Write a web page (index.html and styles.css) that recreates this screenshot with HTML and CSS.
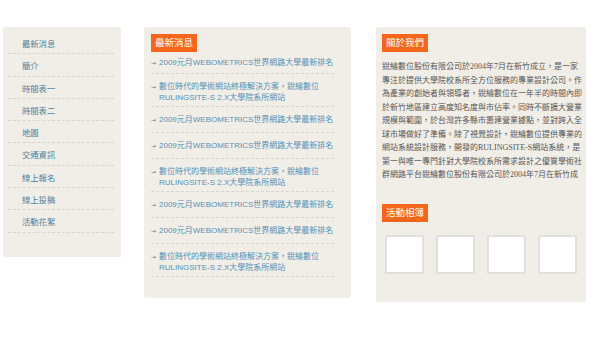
FILE: index.html
```html
<!DOCTYPE html>
<html lang="zh-Hant">
<head>
    <meta charset="UTF-8">
    <meta name="viewport" content="width=device-width, initial-scale=1.0">
    <title>銳綸數位</title>
    <link rel="stylesheet" href="styles.css">
</head>
<body>

    <div class="page">
        <div class="box side">
            <ul class="menu">
                <li><a href="#">最新消息</a></li>
                <li><a href="#">簡介</a></li>
                <li><a href="#">時間表一</a></li>
                <li><a href="#">時間表二</a></li>
                <li><a href="#">地圖</a></li>
                <li><a href="#">交通資訊</a></li>
                <li><a href="#">線上報名</a></li>
                <li><a href="#">線上投稿</a></li>
                <li><a href="#">活動花絮</a></li>
            </ul>
        </div>

        <div class="box news">
            <h3 class="title">最新消息</h3>
            <ul class="news-list">
                <li><a href="#">2009元月WEBOMETRICS世界網路大學最新排名</a></li>
                <li><a href="#">數位時代的學術網站終極解決方案，銳綸數位 RULINGSITE-S 2.X大學院系所網站</a></li>
                <li><a href="#">2009元月WEBOMETRICS世界網路大學最新排名</a></li>
                <li><a href="#">2009元月WEBOMETRICS世界網路大學最新排名</a></li>
                <li><a href="#">數位時代的學術網站終極解決方案，銳綸數位 RULINGSITE-S 2.X大學院系所網站</a></li>
                <li><a href="#">2009元月WEBOMETRICS世界網路大學最新排名</a></li>
                <li><a href="#">2009元月WEBOMETRICS世界網路大學最新排名</a></li>
                <li><a href="#">數位時代的學術網站終極解決方案，銳綸數位 RULINGSITE-S 2.X大學院系所網站</a></li>
            </ul>
        </div>

        <div class="box about">
            <h3 class="title">關於我們</h3>
            <p class="intro">
                銳綸數位股份有限公司於2004年7月在新竹成立，是一家<br>
                專注於提供大學院校系所全方位服務的專業設計公司。作<br>
                為產業的創始者與領導者，銳綸數位在一年半的時間內即<br>
                於新竹地區建立高度知名度與市佔率。同時不斷擴大營業<br>
                規模與範圍，於台灣許多縣市籌建營業據點，並對跨入全<br>
                球市場做好了準備。除了視覺設計，銳綸數位提供專業的<br>
                網站系統設計服務，開發的RULINGSITE-S網站系統，是<br>
                第一與唯一專門針對大學院校系所需求設計之優質學術社<br>
                群網路平台銳綸數位股份有限公司於2004年7月在新竹成
            </p>

            <h3 class="title album-title">活動相簿</h3>
            <div class="album">
                <div class="photo"></div>
                <div class="photo"></div>
                <div class="photo"></div>
                <div class="photo"></div>
            </div>
        </div>
    </div>

</body>
</html>
```

FILE: styles.css
```css
body {
    margin: 0;
    padding: 0;
    background-color: #fff;
    font-family: "Liberation Sans", "Noto Sans CJK TC", sans-serif;
    font-size: 8px;
}
a {
    text-decoration: none;
}
ul {
    list-style: none;
    margin: 0;
    padding: 0;
}
.page {
    display: flex;
    align-items: flex-start;
    gap: 23px;
    padding: 27px 0 0 3px;
}
.box {
    background-color: #f1eee8;
    border-radius: 3px;
}

/* left menu */
.side {
    width: 106px;
    padding: 5px 7px 24px 5px;
}
.menu li {
    padding: 5px 0 4.3px 14px;
    font-family: "Noto Sans CJK TC", sans-serif;
    font-size: 8.3px;
    line-height: 12px;
    border-bottom: 1px dashed #d9d5cd;
}
.menu a {
    color: #4f7f9f;
}

/* titles */
.title {
    width: fit-content;
    margin: 0;
    padding: 0 4px;
    background-color: #f4661c;
    color: #fff;
    font-size: 9.5px;
    font-weight: normal;
    line-height: 18px;
}

/* news */
.news {
    width: 183px;
    padding: 7px 17px 21px 7px;
}
.news-list li {
    display: flex;
    min-height: 15px;
    padding: 7px 0 3px;
    line-height: 11px;
    border-bottom: 1px dashed #d9d5cd;
}
.news-list li:first-child {
    padding: 5px 0 1px;
}
.news-list li::before {
    content: "→";
    flex: none;
    width: 8px;
    color: #5f7f96;
    font-family: "DejaVu Sans", sans-serif;
    font-size: 6px;
}
.news-list a {
    color: #5590b6;
}

/* about */
.about {
    width: 200px;
    margin-left: 2px;
    padding: 7px 4px 28px 6px;
}
.intro {
    margin: 8px 0 0;
    color: #555;
    font-family: "Liberation Serif", "Noto Sans CJK TC", serif;
    font-size: 8px;
    line-height: 13.5px;
}
.album-title {
    margin-top: 22px;
}
.album {
    display: flex;
    gap: 12px;
    margin-top: 13px;
    padding-left: 3px;
}
.photo {
    width: 35px;
    height: 35px;
    background-color: #fff;
    border: 2px solid #e2e0dc;
}
```
